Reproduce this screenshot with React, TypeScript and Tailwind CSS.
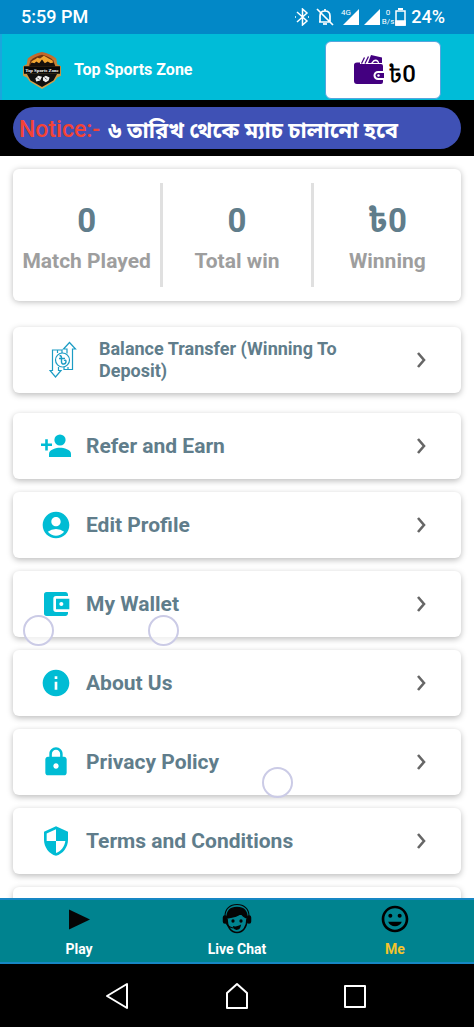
import type { ReactNode } from "react";
import {
  MdAccountCircle,
  MdAccountBalanceWallet,
  MdInfo,
  MdLock,
  MdSecurity,
  MdMood,
} from "react-icons/md";

// One tappable row of the profile menu
type MenuItem = {
  label: string;
  icon: ReactNode;
};

type Stat = { label: string; value: string };

const stats: Stat[] = [
  { label: "Match Played", value: "0" },
  { label: "Total win", value: "0" },
  { label: "Winning", value: "৳0" },
];

const menu: MenuItem[] = [
  { label: "Refer and Earn", icon: <AddPersonIcon /> },
  { label: "Edit Profile", icon: <MdAccountCircle className="size-8" /> },
  { label: "My Wallet", icon: <MdAccountBalanceWallet className="size-8" /> },
  { label: "About Us", icon: <MdInfo className="size-8" /> },
  { label: "Privacy Policy", icon: <MdLock className="size-8" /> },
  { label: "Terms and Conditions", icon: <MdSecurity className="size-8" /> },
];

function AddPersonIcon() {
  return (
    <svg viewBox="0 0 32 24" className="h-6 w-8" fill="currentColor">
      <circle cx="20" cy="6" r="5.6" />
      <path d="M9 23v-3.2c0-4.3 7.3-6 11-6s11 1.7 11 6V23z" />
      <path d="M5.2 5.2h2.6v4.3H12v2.6H7.8v4.3H5.2v-4.3H1V9.5h4.2z" />
    </svg>
  );
}

function TransferIcon() {
  return (
    <svg viewBox="0 0 28 38" className="h-[38px] w-7" fill="none" stroke="#1c9cc4" strokeWidth="1.2">
      <path d="M8.5 12V9h-5v20.5H1l5.5 6.5 5.5-6.5H9.5V26" />
      <path d="M9 9h4v3M19 26v2.5h4.5V8h3L20.5 1.5 14.5 8H18v4.5M15 26v2.5h4" />
      <circle cx="13.5" cy="19" r="7" />
      <path d="M10.5 14.5c2 0 2 1 2 2.5v4c0 3 4.5 2.5 4.5-.5 0-1.5-1.5-1.5-1.5-.5M10 17.5h6" strokeWidth="1.4" />
    </svg>
  );
}

function Chevron() {
  return (
    <svg viewBox="0 0 10 16" className="h-4 w-[10px] shrink-0" fill="none" stroke="#666" strokeWidth="2.6">
      <path d="M2 1l6 7-6 7" />
    </svg>
  );
}

function LogoBadge() {
  return (
    <svg viewBox="0 0 42 40" className="h-[38px] w-10">
      <defs>
        <linearGradient id="badge" x1="0" y1="0" x2="0" y2="1">
          <stop offset="0" stopColor="#c06028" />
          <stop offset="0.5" stopColor="#c89642" />
          <stop offset="1" stopColor="#d3a350" />
        </linearGradient>
      </defs>
      <path d="M21 1c6 1.5 11 3 15 7l1 6 4 2v10l-4 2-3 4-13 8-13-8-3-4-4-2V16l4-2 1-6c4-4 9-5.5 15-7z" fill="url(#badge)" />
      <path d="M21 4c5 1.5 9 3 12 6l2 6H7l2-6c3-3 7-4.5 12-6z" fill="#6b3412" />
      <path d="M10 11c2-2 4-2 6-4l3 1 4-3 5 3 4 2 1 3H9z" fill="#f0a532" />
      <path d="M8 16l2-4 3 1 2-2 3 2 3-4 3 4 3-2 3 2 3-1 2 4z" fill="#16100c" />
      <path d="M2 16h38v8H2z" fill="#080808" />
      <path d="M5 24h32l-4 7-12 7-12-7z" fill="#101010" />
      <text x="21" y="21.7" textAnchor="middle" fontSize="5" fontWeight="700" fill="#fff" fontFamily="Liberation Serif, serif">Top Sports Zone</text>
      <path d="M14 29l3-3 4 1-2 4-4 1zM22 28l3-2 4 2-1 3-3 2-3-2z" fill="#eee" />
      <path d="M16 28l2 2m6-2 2 2" stroke="#333" />
    </svg>
  );
}

function MoneyWalletIcon() {
  return (
    <svg viewBox="0 0 30 30" className="size-[30px]" fill="#430080">
      <path d="M3 9h24a2 2 0 0 1 2 2v5h-5a4.5 4.5 0 0 0 0 9h5v2a2 2 0 0 1-2 2H3a3 3 0 0 1-3-3V10c0-1.5 1-2.5 3-2.5h3V9z" />
      <path d="M24 18h6v5h-6a2.5 2.5 0 0 1 0-5z" />
      <path d="M7.5 8.5l3-6M11 8.5l3.5-7" stroke="#430080" strokeWidth="1.3" />
      <path d="M17 0l11 2.5V8h-3c0-4-5-5-7-1l-1 1h-3z" />
      <path d="M19 8c1-2.5 4-2.5 5 0z" />
      <circle cx="24.5" cy="20.5" r="1.2" fill="#fff" />
    </svg>
  );
}

function AgentIcon() {
  return (
    <svg viewBox="0 0 32 32" className="size-8" fill="none" stroke="#050505" strokeWidth="1.5">
      <path d="M4 13C4 6 9 1.5 16 1.5S28 6 28 13" strokeWidth="1.2" />
      <path d="M6 16c0 8 4 13.5 10 13.5S26 24 26 16" />
      <path d="M6 15C6 8 10 4.5 16 4.5S26 8 26 15c-3-1-5-3-6-5-3 3-7 4-14 5z" fill="#050505" />
      <rect x="2.5" y="13" width="3" height="7" rx="1.5" fill="#050505" />
      <rect x="26.5" y="13" width="3" height="7" rx="1.5" fill="#050505" />
      <path d="M5 20c2 4 5 5 9 5" strokeWidth="1.2" />
      <path d="M13 24c2 .5 4 0 6-1-1 4-5 4-6 1z" fill="#050505" />
      <circle cx="12" cy="18" r=".9" fill="#050505" />
      <circle cx="20" cy="18" r=".9" fill="#050505" />
    </svg>
  );
}

function StatusBar() {
  return (
    <div className="flex h-[34px] shrink-0 items-center justify-between bg-[#0288c7] pr-[29px] pl-[21px] text-lg font-medium text-white">
      <span>5:59 PM</span>
      <div className="flex items-center">
        <svg viewBox="0 0 16 18" className="mr-[6px] h-[18px] w-4" fill="none" stroke="#fff" strokeWidth="1.5">
          <path d="M3 4l10 9-4.5 4V1L13 5 3 14" />
          <path d="M1 9h1M14 9h1" />
        </svg>
        <svg viewBox="0 0 18 18" className="mr-[7px] size-[18px]" fill="none" stroke="#fff" strokeWidth="1.7">
          <path d="M4 14V8c0-3 2-5 5-5s5 2 5 5v6H3M9 1v2M1 1l16 16" />
          <path d="M7 16h4" />
        </svg>
        <span className="-mr-2 pb-2 text-[8px] leading-3 font-normal">4G</span>
        <svg viewBox="0 0 16 16" className="mr-[5px] size-4" fill="#fff"><path d="M16 0v16H0z" /></svg>
        <svg viewBox="0 0 16 16" className="mr-[2px] size-4" fill="#fff"><path d="M16 0v16H0z" /></svg>
        <span className="mr-[1px] flex flex-col items-center text-[8px] leading-[9px] font-normal">
          <span>0</span>
          <span>B/s</span>
        </span>
        <svg viewBox="0 0 11 18" className="mr-[5px] h-[18px] w-[11px]" fill="none" stroke="#fff" strokeWidth="1.5">
          <path d="M1 3h9v14H1z" />
          <path d="M3 1h5" strokeWidth="2" />
          <path d="M1 13h9v4H1z" fill="#fff" />
        </svg>
        <span>24%</span>
      </div>
    </div>
  );
}

// Translucent ring left where a finger touches the screen
function TouchRing({ className }: { className: string }) {
  return <span className={`pointer-events-none absolute z-10 size-[31px] rounded-full border-2 border-[#cbcbe6] bg-white/70 ${className}`} />;
}

export default function App() {
  return (
    <div className="flex h-screen flex-col overflow-hidden bg-white font-[Roboto,'Noto_Sans_Bengali',sans-serif]">
      <StatusBar />

      <header className="flex h-[66px] shrink-0 items-center border-l-2 border-[#1aa6dc] bg-[#00bcd8] pt-[6px] pr-[33px] pl-5">
        <LogoBadge />
        <h1 className="ml-3 flex-1 text-base font-bold text-white">Top Sports Zone</h1>
        <button className="flex h-[58px] w-[116px] items-center justify-center gap-1 rounded-md border border-[#55a5dd] bg-white pl-1 text-2xl font-medium text-black">
          <MoneyWalletIcon />
          <span className="pt-2">৳0</span>
        </button>
      </header>

      <div className="shrink-0 bg-black px-[13px] py-[7px]">
        <p className="flex h-[42px] items-center gap-2 rounded-full bg-[#3f51b5] px-[6px] pt-1 text-[22px] font-bold whitespace-nowrap text-white">
          <span className="text-[23px] font-medium text-[#f44336]">Notice:-</span>
          ৬ তারিখ থেকে ম্যাচ চালানো হবে
        </p>
      </div>

      <main className="min-h-0 flex-1 overflow-hidden px-[13px] pt-[13px]">
        <section className="flex h-[132px] divide-x-3 divide-[#e0e0e0] rounded-md bg-white py-[14px] shadow-[0_1px_6px_#0004]">
          {stats.map((stat) => (
            <div key={stat.label} className="flex flex-1 flex-col items-center justify-center gap-2 pt-2 whitespace-nowrap">
              <strong className="text-[33px] leading-9 font-bold text-[#607d8b]">{stat.value}</strong>
              <span className="text-[21px] leading-7 font-bold text-[#9e9e9e]">{stat.label}</span>
            </div>
          ))}
        </section>

        <button className="mt-[26px] flex h-[66px] w-full items-center rounded-md bg-white pr-[35px] pl-9 text-left shadow-[0_2px_6px_#0004]">
          <TransferIcon />
          <span className="mr-12 ml-[22px] flex-1 text-lg leading-[22px] font-bold text-[#607d8b]">
            Balance Transfer (Winning To Deposit)
          </span>
          <Chevron />
        </button>

        <div className="relative mt-5 flex flex-col gap-[13px]">
          {menu.map((item) => (
            <button key={item.label} className="flex h-[66px] w-full shrink-0 items-center rounded-md bg-white pr-[35px] pl-[27px] text-left shadow-[0_2px_6px_#0004]">
              <span className="flex w-8 justify-center text-[#00bcd4]">{item.icon}</span>
              <span className="ml-[14px] flex-1 text-[21px] leading-8 font-bold text-[#607d8b]">{item.label}</span>
              <Chevron />
            </button>
          ))}
          {/* top edge of the next card, scrolled under the tab bar */}
          <div className="h-[66px] rounded-md bg-white shadow-[0_2px_6px_#0004]" />
          <TouchRing className="top-[202px] left-[10px]" />
          <TouchRing className="top-[202px] left-[135px]" />
          <TouchRing className="top-[354px] left-[249px]" />
        </div>
      </main>

      <nav className="z-20 grid h-[66px] shrink-0 grid-cols-3 border-y-2 border-[#1687c4] bg-[#00838f] text-sm font-bold text-white">
        <button className="flex flex-col items-center justify-center gap-1">
          <svg viewBox="0 0 32 32" className="size-8"><path d="M6 6.5 27 16.5 6 26.5z" fill="#050505" /></svg>
          Play
        </button>
        <button className="flex flex-col items-center justify-center gap-1">
          <AgentIcon />
          Live Chat
        </button>
        <button className="flex flex-col items-center justify-center gap-1 text-[#f4c42c]">
          <MdMood className="size-8 text-black" />
          Me
        </button>
      </nav>

      <div className="z-20 flex h-[63px] shrink-0 items-center justify-between bg-black px-[106px] text-white">
        <button aria-label="Back">
          <svg viewBox="0 0 24 28" className="h-7 w-6" fill="none" stroke="currentColor" strokeWidth="2" strokeLinejoin="round"><path d="M21 2v24L1 14z" /></svg>
        </button>
        <button aria-label="Home">
          <svg viewBox="0 0 24 28" className="h-7 w-6" fill="none" stroke="currentColor" strokeWidth="2" strokeLinejoin="round"><path d="M12 2 2 11v15h20V11z" /></svg>
        </button>
        <button aria-label="Recent apps">
          <svg viewBox="0 0 24 28" className="h-7 w-6" fill="none" stroke="currentColor" strokeWidth="2" strokeLinejoin="round"><path d="M1 4h20v21H1z" /></svg>
        </button>
      </div>
    </div>
  );
}
